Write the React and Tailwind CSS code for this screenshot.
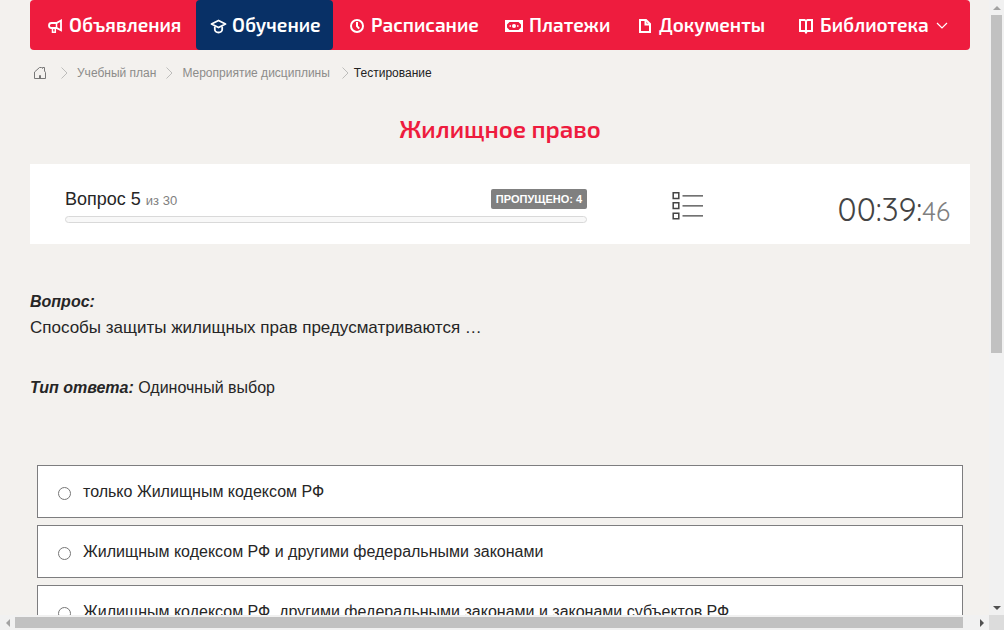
import React from "react";

function Megaphone() {
  return (
    <svg width="14" height="15" viewBox="0 0 14 15" fill="none" stroke="currentColor" strokeWidth="2" aria-hidden="true">
      <path strokeWidth="1.800" d="M13 1.500v9.800L8.500 9H3.500C1.800 9 1 8 1 6.500S1.800 4 3.500 4h5z" />
      <path strokeWidth="1.500" d="M8.500 4v5M4.500 9v4.200h2.800V9" />
    </svg>
  );
}

function Cap() {
  return (
    <svg width="17" height="15" viewBox="0 0 17 15" fill="none" stroke="currentColor" strokeWidth="1.800" strokeLinejoin="round" aria-hidden="true">
      <path d="M1.500 5 8.500 1.500 15.500 5 8.500 8.500z" />
      <path d="M4.800 7.500v3c0 1.500 1.600 3 3.700 3s3.700-1.500 3.700-3v-3" />
    </svg>
  );
}

function Clock() {
  return (
    <svg width="14" height="14" viewBox="0 0 14 14" fill="none" stroke="currentColor" strokeWidth="2" aria-hidden="true">
      <circle cx="7" cy="7" r="6" />
      <path d="M7 3v4.200l2.200 2.400" />
    </svg>
  );
}

function Banknote() {
  return (
    <svg width="18" height="12" viewBox="0 0 18 12" fill="none" stroke="currentColor" aria-hidden="true">
      <path strokeWidth="2" d="M1 1h16v10H1z" />
      <path fill="currentColor" stroke="none" d="M2 2h2.500L2 4.500zM16 2h-2.500L16 4.500zM2 10h2.500L2 7.500zM16 10h-2.500L16 7.500z" />
      <circle cx="9" cy="6" r="2" fill="currentColor" stroke="none" />
      <path fill="currentColor" stroke="none" d="M4.500 5.300h1.500v1.500H4.500zM12 5.300h1.500v1.500H12z" />
    </svg>
  );
}

function Sheet() {
  return (
    <svg width="12" height="14" viewBox="0 0 12 14" fill="none" stroke="currentColor" strokeWidth="2" aria-hidden="true">
      <path d="M1 1h6l4 4v8H1z" />
      <path d="M6.500 1v4.500H11" />
    </svg>
  );
}

function Book() {
  return (
    <svg width="14" height="15" viewBox="0 0 14 15" fill="none" stroke="currentColor" strokeWidth="2" aria-hidden="true">
      <path d="M7 2v10M7 2 5.500 1H1v11h4.500L7 13l1.500-1H13V1H8.500z" />
      <path d="M7 11v3.500" />
    </svg>
  );
}

function Home() {
  return (
    <svg width="14" height="14" viewBox="0 0 14 14" fill="none" stroke="#777" strokeWidth="1" aria-hidden="true">
      <path d="M1.500 12.500V6L6.500 1.500h2l1 1V1.500h2V5l1 1.500v6z" />
      <path d="M6.500 12.500v-3h1v3" />
    </svg>
  );
}

function Separator() {
  return (
    <svg width="7" height="12" viewBox="0 0 7 12" fill="none" stroke="#bdbdbb" strokeWidth="1" aria-hidden="true">
      <path d="m.5.5 5.500 5.500-5.500 5.500" />
    </svg>
  );
}

function ListIcon() {
  return (
    <svg width="32" height="30" viewBox="0 0 32 30" fill="none" stroke="#444" aria-hidden="true">
      <path strokeWidth="1.500" d="M1.200 1.800h5.600v5.600H1.200zM1.200 11.800h5.600v5.600H1.200zM1.200 22.200h5.600v5.600H1.200z" />
      <path strokeWidth="1.300" d="M10.500 4.900H31M10.500 14.900H31M10.500 24.900H31" />
    </svg>
  );
}

const navItems = [
  { label: "Объявления", Icon: Megaphone, look: "pl-[18px] gap-[7px]" },
  { label: "Обучение", Icon: Cap, look: "pl-[14px] gap-[5px] rounded bg-[#083066]", active: true },
  { label: "Расписание", Icon: Clock, look: "pl-[17px] gap-[7px]" },
  { label: "Платежи", Icon: Banknote, look: "pl-[13px] gap-[6px]" },
  { label: "Документы", Icon: Sheet, look: "pl-[15px] gap-[8px]" },
  { label: "Библиотека", Icon: Book, look: "pl-[17px] gap-[7px]", menu: true },
];

const answers = [
  "только Жилищным кодексом РФ",
  "Жилищным кодексом РФ и другими федеральными законами",
  "Жилищным кодексом РФ, другими федеральными законами и законами субъектов РФ",
];

function Nav() {
  return (
    <nav className="grid h-[50px] grid-cols-[166fr_137fr_159fr_132fr_158fr_188fr] rounded bg-[#ee1c3e] font-['Exo_2','Noto_Sans',sans-serif] text-[19px] font-semibold text-white">
      {navItems.map(({ label, Icon, look, active, menu }) => (
        <a key={label} href="#" aria-current={active ? "page" : undefined} className={`flex items-center whitespace-nowrap ${look}`}>
          <span className="pt-0.5"><Icon /></span>
          <span>{label}</span>
          {menu && (
            <svg width="12" height="8" viewBox="0 0 12 8" fill="none" stroke="currentColor" strokeWidth="1.200" aria-hidden="true">
              <path d="m1 2 5 5 5-5" />
            </svg>
          )}
        </a>
      ))}
    </nav>
  );
}

function Breadcrumbs() {
  return (
    <nav aria-label="Навигация" className="flex h-[46px] items-center pl-[3px] text-xs text-[#8c8c8a]">
      <a href="#" aria-label="Главная" className="mr-[14px]"><Home /></a>
      <Separator />
      <a href="#" className="mr-[10px] ml-[9px]">Учебный план</a>
      <Separator />
      <a href="#" className="mr-[12px] ml-[9px]">Мероприятие дисциплины</a>
      <Separator />
      <span className="ml-[5px] text-[#222]">Тестирование</span>
    </nav>
  );
}

function Status() {
  return (
    <section className="flex h-20 items-center bg-white pr-5 pl-[35px]">
      <div className="w-[59%]">
        <div className="flex h-7 items-center justify-between">
          <h2 className="text-lg">
            Вопрос 5 <small className="text-[13px] text-[#808080]">из 30</small>
          </h2>
          <span className="rounded-[2px] bg-[#808080] px-[5px] text-[11px] leading-[20px] font-bold text-white uppercase">Пропущено: 4</span>
        </div>
        <div role="progressbar" aria-label="Ход теста" aria-valuenow={0} className="mt-[3px] h-[7px] rounded-full border border-[#d9d9d9] bg-[#f8f8f8]" />
      </div>
      <button type="button" aria-label="Список вопросов" className="ml-[85px] mt-1"><ListIcon /></button>
      <div className="ml-auto pt-3 font-['Quicksand','Lato',sans-serif] text-[32px] leading-10 font-normal text-[#444]">
        00:39:<span className="text-[26px] text-[#808080]">46</span>
      </div>
    </section>
  );
}

function Arrow({ d, color }) {
  return (
    <svg width="8" height="8" viewBox="0 0 8 8" fill={color} aria-hidden="true"><path d={d} /></svg>
  );
}

export default function App() {
  return (
    <div className="grid h-screen grid-cols-[minmax(0,1fr)_15px] grid-rows-[minmax(0,1fr)_15px] bg-[#f3f1ee] font-['Liberation_Sans',Arial,sans-serif] text-[#262626]">
      <main className="overflow-hidden pr-[19px] pl-[30px]">
        <Nav />
        <Breadcrumbs />
        <h1 className="pt-4 pb-[19px] text-center font-['Exo_2','Noto_Sans',sans-serif] text-2xl leading-[33px] font-semibold text-[#ee1c3e]">Жилищное право</h1>
        <Status />
        <section className="pt-[45px] text-base leading-[26px]">
          <h3 className="font-bold italic">Вопрос:</h3>
          <p className="text-[17px]">Способы защиты жилищных прав предусматриваются …</p>
          <p className="pt-[34px]"><strong className="italic">Тип ответа:</strong> Одиночный выбор</p>
        </section>
        <form className="mt-16 flex flex-col gap-[7px] px-[7px]">
          {answers.map((answer) => (
            <label key={answer} className="flex h-[53px] items-center border border-[#7d7d7f] bg-white pl-[20px] text-base">
              <input type="radio" name="answer" className="mt-1 mr-[12px] size-[13px]" />
              {answer}
            </label>
          ))}
        </form>
      </main>
      <div aria-hidden="true" className="flex flex-col items-center bg-[#f1f1f1]">
        <div className="flex h-[15px] items-center"><Arrow d="M0 6 4 2l4 4z" color="#a3a3a3" /></div>
        <div className="h-[55%] w-[11px] shrink-0 bg-[#c1c1c1]" />
        <div className="mt-auto flex h-[15px] items-center"><Arrow d="m0 2 4 4 4-4z" color="#505050" /></div>
      </div>
      <div aria-hidden="true" className="flex items-center bg-[#f1f1f1]">
        <div className="flex w-[15px] justify-center"><Arrow d="M6 0 2 4l4 4z" color="#a3a3a3" /></div>
        <div className="h-[11px] flex-1 bg-[#c1c1c1]" />
        <div className="ml-[11px] flex w-[15px] justify-center"><Arrow d="m2 0 4 4-4 4z" color="#505050" /></div>
      </div>
      <div className="bg-[#dcdcdc]" />
    </div>
  );
}
